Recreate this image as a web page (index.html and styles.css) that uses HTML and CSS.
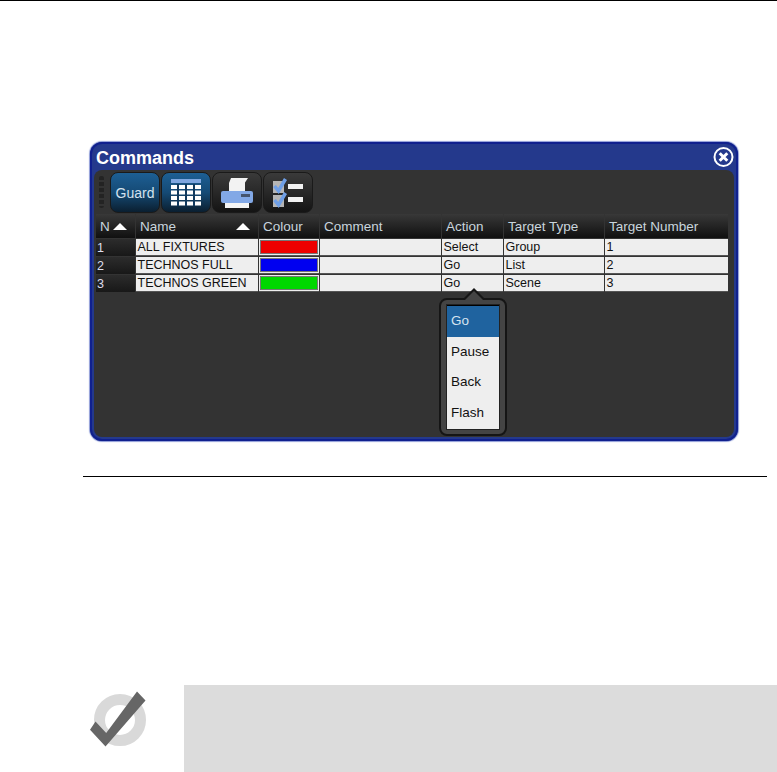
FILE: index.html
```html
<!DOCTYPE html>
<html lang="en">
<head>
  <meta charset="UTF-8" />
  <title>Commands</title>
  <link rel="stylesheet" href="styles.css">
</head>
<body>
  <div class="top-rule"></div>

  <div class="window">
    <div class="title-bar">
      <span class="title">Commands</span>
      <svg class="close" width="22" height="22" viewBox="0 0 22 22">
        <circle cx="10.500" cy="11" r="9" fill="#24398c" stroke="#fff" stroke-width="2" />
        <path d="M6.700 7.200l7.600 7.600M14.300 7.200l-7.600 7.600" stroke="#fff" stroke-width="3" />
      </svg>
    </div>

    <div class="panel">
      <div class="toolbar">
        <div class="grip"></div>
        <button class="tool on guard">Guard</button>
        <button class="tool on">
          <svg width="32" height="27" viewBox="0 0 32 27">
            <rect x="1" y="0" width="30" height="4" fill="#7ea6e0" />
            <path d="M1 6h30v4H1zM1 11.500h30v4H1zM1 17h30v4H1zM1 22.500h30v4H1z" fill="#fff" />
            <path d="M8 5v22M16 5v22M24 5v22" stroke="#123a5e" stroke-width="2" />
          </svg>
        </button>
        <button class="tool">
          <svg width="34" height="32" viewBox="0 0 34 32">
            <path d="M11 1h17l-3 4.500v9H9V6z" fill="#f2f2f2" />
            <path d="M3 14h28a2 2 0 0 1 2 2v8a2 2 0 0 1-2 2H3a2 2 0 0 1-2-2v-8a2 2 0 0 1 2-2z" fill="#82a8e6" />
            <rect x="21" y="17" width="9" height="3" fill="#44546e" />
            <rect x="5" y="26" width="24" height="5" fill="#f4f4f4" />
          </svg>
        </button>
        <button class="tool">
          <svg width="34" height="32" viewBox="0 0 34 32">
            <path d="M2 4h11v12H2zM2 18h11v12H2z" fill="#b5b5b5" />
            <path d="M3.500 9l4 5 7-12M3.500 23l4 5 7-12" fill="none" stroke="#6f9fe6" stroke-width="3.500" />
            <rect x="17" y="7" width="15" height="5" fill="#f2f2f2" />
            <rect x="17" y="20" width="15" height="5" fill="#f2f2f2" />
          </svg>
        </button>
      </div>

      <div class="table">
        <div class="th">N <i class="sort"></i></div>
        <div class="th">Name <i class="sort"></i></div>
        <div class="th">Colour</div>
        <div class="th">Comment</div>
        <div class="th">Action</div>
        <div class="th">Target Type</div>
        <div class="th">Target Number</div>

        <div class="num">1</div>
        <div class="td">ALL FIXTURES</div>
        <div class="td swatch-cell"><div class="swatch red"></div></div>
        <div class="td"></div>
        <div class="td">Select</div>
        <div class="td">Group</div>
        <div class="td">1</div>

        <div class="num">2</div>
        <div class="td">TECHNOS FULL</div>
        <div class="td swatch-cell"><div class="swatch blue"></div></div>
        <div class="td"></div>
        <div class="td">Go</div>
        <div class="td">List</div>
        <div class="td">2</div>

        <div class="num">3</div>
        <div class="td">TECHNOS GREEN</div>
        <div class="td swatch-cell"><div class="swatch green"></div></div>
        <div class="td"></div>
        <div class="td">Go</div>
        <div class="td">Scene</div>
        <div class="td">3</div>
      </div>

      <div class="menu">
        <ul>
          <li class="active">Go</li>
          <li>Pause</li>
          <li>Back</li>
          <li>Flash</li>
        </ul>
      </div>
    </div>
  </div>

  <div class="rule"></div>

  <div class="note">
    <svg class="note-icon" width="90" height="70" viewBox="0 0 90 70">
      <circle cx="45" cy="35" r="20.500" fill="none" stroke="#d9d9d9" stroke-width="11" />
      <path d="M62 6.500l8.500 9-40 46-15.500-16.700 5.500-8.300 10.700 11.500z" fill="#666" />
    </svg>
    <div class="note-box"></div>
  </div>
</body>
</html>
```

FILE: styles.css
```css
* {
  margin: 0;
  padding: 0;
  box-sizing: border-box;
}

body {
  background: #fff;
  font-family: "Liberation Sans", Arial, sans-serif;
}

.top-rule {
  height: 1px;
  background: #000;
}

.window {
  width: 648px;
  height: 299px;
  margin: 141px 0 0 90px;
  padding: 0 4px 4px;
  background: #24398c;
  border-radius: 12px;
  box-shadow: inset 0 0 0 2px #10208e, 0 0 1px 1px #8d9bd6;
}

.title-bar {
  height: 28px;
  display: flex;
  align-items: center;
  justify-content: space-between;
  padding: 4px 0 0 2px;
}

.title {
  color: #fff;
  font-size: 18px;
  font-weight: bold;
}

.close {
  margin: -2px -1px 0 0;
}

.panel {
  position: relative;
  height: 267px;
  background: #333;
  border-radius: 8px;
  padding: 2px 0 0 1px;
}

.toolbar {
  display: flex;
  gap: 1px;
  height: 41px;
  padding-left: 4px;
}

.grip {
  width: 5px;
  height: 32px;
  margin: 4px 5px 0 0;
  background: repeating-linear-gradient(#232323 0 4px, #333 4px 6px);
  border-radius: 2px;
}

.tool {
  width: 50px;
  height: 41px;
  border: 1px solid #1a1a1a;
  border-radius: 8px;
  background: linear-gradient(#3a3a3a, #2a2a2a 45%, #141414);
  display: flex;
  align-items: center;
  justify-content: center;
}

.tool.on {
  background: linear-gradient(#1d5f94, #154a75 50%, #0b1f30);
}

.guard {
  color: #d4e2ee;
  font-size: 14px;
  font-family: inherit;
}

.table {
  display: grid;
  grid-template-columns: 39px 122px 60px 121px 61px 100px 123px;
  grid-template-rows: 24px repeat(3, 17px);
  gap: 1px;
  width: 632px;
  margin: 1px 0 0 1px;
  font-size: 12.500px;
}

.th {
  display: flex;
  align-items: center;
  justify-content: space-between;
  padding: 0 8px 0 4px;
  color: #c9d5dd;
  font-size: 13.500px;
  background: linear-gradient(#383838, #101010);
  white-space: nowrap;
}

.sort {
  width: 0;
  height: 0;
  border-left: 7px solid transparent;
  border-right: 7px solid transparent;
  border-bottom: 7px solid #fff;
}

.num {
  padding: 1px 0 0 1px;
  color: #dde;
  background: linear-gradient(#2c2c2c, #181818);
  line-height: 16px;
}

.td {
  padding-left: 1.500px;
  background: #eee;
  color: #111;
  line-height: 16px;
  border-bottom: 1px solid #555;
  white-space: nowrap;
}

.swatch-cell {
  padding: 1px;
}

.swatch {
  height: 14px;
  border: 1px solid #777;
}

.red { background: #ee0000; }
.blue { background: #0000f0; }
.green { background: #00d800; }

.menu {
  position: absolute;
  left: 345px;
  top: 128px;
  width: 68px;
  height: 138px;
  background: #444;
  border: 2px solid #151515;
  border-radius: 8px;
  padding: 5px 6px 6px;
}

.menu::before,
.menu::after {
  content: "";
  position: absolute;
  width: 0;
  height: 0;
  border-left: 11px solid transparent;
  border-right: 11px solid transparent;
}

.menu::before {
  left: 22px;
  top: -12px;
  border-bottom: 11px solid #151515;
}

.menu::after {
  left: 22px;
  top: -9px;
  border-bottom: 11px solid #444;
}

.menu ul {
  list-style: none;
  height: 124px;
  background: #eee;
  border-top: 1px solid #000;
  outline: 1px solid #222;
  font-size: 13.500px;
  color: #111;
}

.menu li {
  height: 30.500px;
  line-height: 30px;
  padding-left: 4px;
}

.menu li.active {
  background: #1f639f;
  color: #d6e4f0;
}

.rule {
  width: 684px;
  height: 1px;
  margin: 35px 0 0 83px;
  background: #000;
}

.note {
  display: flex;
  align-items: flex-start;
  margin-top: 208px;
}

.note-icon {
  flex: none;
  width: 90px;
  margin-left: 75px;
}

.note-box {
  flex: 1;
  height: 87px;
  margin-left: 19px;
  background: #dcdcdc;
}
```
